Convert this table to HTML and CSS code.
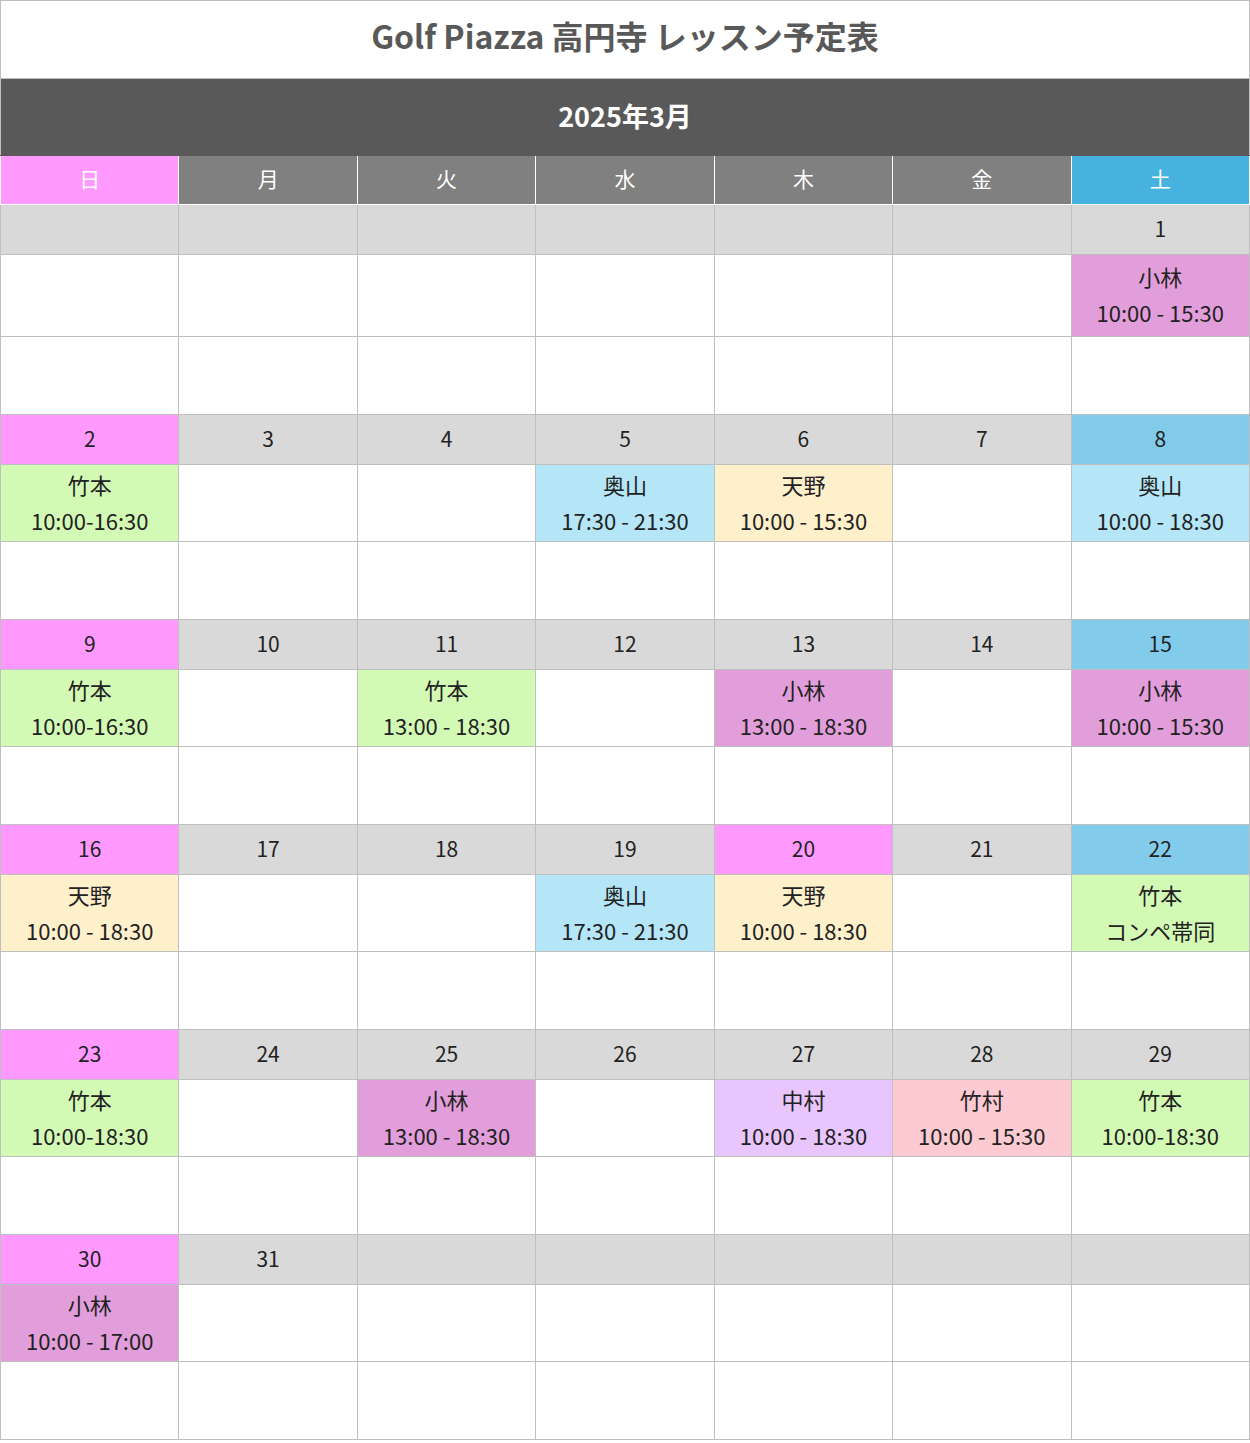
FILE: index.html
```html
<!DOCTYPE html>
<html lang="ja">
<head>
    <meta charset="UTF-8">
    <meta name="viewport" content="width=device-width, initial-scale=1.0">
    <title>Golf Piazza 高円寺 レッスン予定表</title>
    <link rel="stylesheet" href="styles.css">
</head>
<body>
    <table id="calendario">
        <colgroup>
            <col><col><col><col><col><col><col>
        </colgroup>
        <tr>
            <td colspan="7" id="titulo">Golf Piazza 高円寺 レッスン予定表</td>
        </tr>
        <tr>
            <td colspan="7" id="mes">2025年3月</td>
        </tr>
        <tr class="semana">
            <td class="dom">日</td>
            <td>月</td>
            <td>火</td>
            <td>水</td>
            <td>木</td>
            <td>金</td>
            <td class="sab">土</td>
        </tr>

        <!-- semana 1 -->
        <tr class="dias primeira">
            <td></td><td></td><td></td><td></td><td></td><td></td><td>1</td>
        </tr>
        <tr class="aulas primeira">
            <td></td><td></td><td></td><td></td><td></td><td></td>
            <td class="kobayashi">小林<br>10:00 - 15:30</td>
        </tr>
        <tr class="vazio">
            <td></td><td></td><td></td><td></td><td></td><td></td><td></td>
        </tr>

        <!-- semana 2 -->
        <tr class="dias">
            <td class="dom">2</td><td>3</td><td>4</td><td>5</td><td>6</td><td>7</td><td class="sab">8</td>
        </tr>
        <tr class="aulas">
            <td class="takemoto">竹本<br>10:00-16:30</td>
            <td></td><td></td>
            <td class="okuyama">奥山<br>17:30 - 21:30</td>
            <td class="amano">天野<br>10:00 - 15:30</td>
            <td></td>
            <td class="okuyama">奥山<br>10:00 - 18:30</td>
        </tr>
        <tr class="vazio">
            <td></td><td></td><td></td><td></td><td></td><td></td><td></td>
        </tr>

        <!-- semana 3 -->
        <tr class="dias">
            <td class="dom">9</td><td>10</td><td>11</td><td>12</td><td>13</td><td>14</td><td class="sab">15</td>
        </tr>
        <tr class="aulas">
            <td class="takemoto">竹本<br>10:00-16:30</td>
            <td></td>
            <td class="takemoto">竹本<br>13:00 - 18:30</td>
            <td></td>
            <td class="kobayashi">小林<br>13:00 - 18:30</td>
            <td></td>
            <td class="kobayashi">小林<br>10:00 - 15:30</td>
        </tr>
        <tr class="vazio">
            <td></td><td></td><td></td><td></td><td></td><td></td><td></td>
        </tr>

        <!-- semana 4 -->
        <tr class="dias">
            <td class="dom">16</td><td>17</td><td>18</td><td>19</td><td class="dom">20</td><td>21</td><td class="sab">22</td>
        </tr>
        <tr class="aulas">
            <td class="amano">天野<br>10:00 - 18:30</td>
            <td></td><td></td>
            <td class="okuyama">奥山<br>17:30 - 21:30</td>
            <td class="amano">天野<br>10:00 - 18:30</td>
            <td></td>
            <td class="takemoto">竹本<br>コンペ帯同</td>
        </tr>
        <tr class="vazio">
            <td></td><td></td><td></td><td></td><td></td><td></td><td></td>
        </tr>

        <!-- semana 5 -->
        <tr class="dias">
            <td class="dom">23</td><td>24</td><td>25</td><td>26</td><td>27</td><td>28</td><td>29</td>
        </tr>
        <tr class="aulas">
            <td class="takemoto">竹本<br>10:00-18:30</td>
            <td></td>
            <td class="kobayashi">小林<br>13:00 - 18:30</td>
            <td></td>
            <td class="nakamura">中村<br>10:00 - 18:30</td>
            <td class="takemura">竹村<br>10:00 - 15:30</td>
            <td class="takemoto">竹本<br>10:00-18:30</td>
        </tr>
        <tr class="vazio">
            <td></td><td></td><td></td><td></td><td></td><td></td><td></td>
        </tr>

        <!-- semana 6 -->
        <tr class="dias">
            <td class="dom">30</td><td>31</td><td></td><td></td><td></td><td></td><td></td>
        </tr>
        <tr class="aulas">
            <td class="kobayashi">小林<br>10:00 - 17:00</td>
            <td></td><td></td><td></td><td></td><td></td><td></td>
        </tr>
        <tr class="vazio">
            <td></td><td></td><td></td><td></td><td></td><td></td><td></td>
        </tr>
    </table>
</body>
</html>
```

FILE: styles.css
```css
* {
    font-family: "Noto Sans CJK JP", "Noto Sans", sans-serif;
    box-sizing: border-box;
}
body {
    margin: 0;
    background-color: #fff;
}
#calendario {
    width: 1250px;
    table-layout: fixed;
    border-collapse: collapse;
    border: 1px solid #bfbfbf;
}
#calendario td {
    border: 1px solid #bfbfbf;
    padding: 0;
    text-align: center;
    color: #222;
    font-size: 21px;
}
#calendario #titulo {
    height: 78px;
    font-size: 32px;
    font-weight: 700;
    color: #595959;
    padding-bottom: 9px;
}
#calendario #mes {
    height: 77px;
    background-color: #595959;
    color: #fff;
    font-size: 27px;
    font-weight: 700;
    border-color: #595959 #bfbfbf;
    padding-bottom: 4px;
}
.semana td {
    height: 49px;
    background-color: #808080;
    border-color: #fff !important;
    color: #fff !important;
    font-size: 21px !important;
    line-height: 1;
    padding-bottom: 4px !important;
}
.semana td.dom {
    background-color: #ff99ff;
}
.semana td.sab {
    background-color: #47b1e0;
}
.dias td {
    height: 50px;
    background-color: #d9d9d9;
    padding-bottom: 4px !important;
}
.dias td.dom {
    background-color: #ff99ff;
}
.dias td.sab {
    background-color: #83cbeb;
}
.aulas td {
    height: 77px;
    font-size: 22px !important;
    line-height: 36px;
    vertical-align: middle;
    padding-bottom: 3px !important;
}
.aulas.primeira td {
    height: 82px;
}
.vazio td {
    height: 78px;
}
.kobayashi {
    background-color: #e29edb;
}
.takemoto {
    background-color: #d3fab5;
}
.okuyama {
    background-color: #b5e6f7;
}
.amano {
    background-color: #fff0cc;
}
.nakamura {
    background-color: #e8c5fd;
}
.takemura {
    background-color: #fecad2;
}
```
